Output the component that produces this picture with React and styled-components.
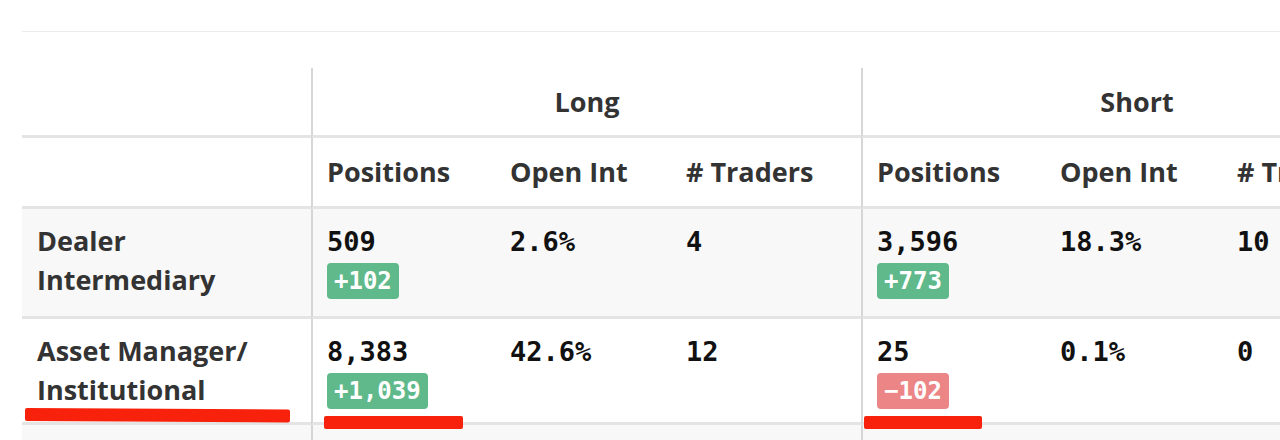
import React from "react";
import styled, { createGlobalStyle } from "styled-components";

const GlobalStyle = createGlobalStyle`
  html, body {
    margin: 0;
    padding: 0;
    background: #fff;
    overflow: hidden;
  }
  body {
    font-family: "Open Sans", "Noto Sans", sans-serif;
  }
`;

const Page = styled.div`
  position: relative;
  width: 1280px;
  height: 440px;
  padding: 31px 0 0 22px;
  box-sizing: border-box;
  overflow: hidden;
`;

const Rule = styled.div`
  height: 1px;
  background: #ececec;
  margin-bottom: 36px;
`;

const Table = styled.table`
  border-collapse: separate;
  border-spacing: 0;
  table-layout: fixed;
  width: 1389px;
`;

const divider = (p) => (p.divider ? "2px solid #d6d6d6" : "none");

const GroupHead = styled.th`
  height: 67px;
  padding: 0;
  text-align: center;
  vertical-align: middle;
  font-size: 27px;
  font-weight: 700;
  color: #333;
  border-bottom: 3px solid #e3e4e3;
  border-left: ${divider};
`;

const ColHead = styled.th`
  height: 66px;
  padding: 0 0 2px ${(p) => (p.divider ? 14 : 16)}px;
  text-align: left;
  vertical-align: middle;
  font-size: 27px;
  font-weight: 700;
  color: #333;
  white-space: nowrap;
  border-bottom: 3px solid #e3e4e3;
  border-left: ${divider};
`;

const Row = styled.tr`
  background: ${(p) => (p.shaded ? "#f7f8f7" : "#fff")};
`;

const Label = styled.td`
  height: ${(p) => p.h}px;
  padding: 12px 0 0 15px;
  box-sizing: border-box;
  vertical-align: top;
  font-size: 27px;
  line-height: 39px;
  font-weight: 700;
  color: #333;
  border-bottom: 3px solid #e3e4e3;
`;

const Cell = styled.td`
  padding: 16px 0 0 ${(p) => (p.divider ? 14 : 16)}px;
  vertical-align: top;
  font-family: "DejaVu Sans Mono", "Liberation Mono", monospace;
  font-size: 27px;
  line-height: 33px;
  font-weight: 700;
  color: #111;
  white-space: nowrap;
  border-bottom: 3px solid #e3e4e3;
  border-left: ${divider};
`;

const Badge = styled.span`
  display: inline-block;
  margin-top: 5px;
  padding: 0 7px;
  height: 36px;
  line-height: 36px;
  border-radius: 4px;
  font-size: 24px;
  color: #fff;
  background: ${(p) => (p.down ? "#ec8585" : "#5fb98a")};
`;

/* hand-drawn red underlines over the table */
const Mark = styled.div`
  position: absolute;
  height: 13px;
  background: #f8220c;
  border-radius: 2px;
  transform-origin: left center;
`;

const rows = [
  {
    name: ["Dealer", "Intermediary"],
    shaded: true,
    h: 110,
    long: ["509", "+102", "2.6%", "4"],
    short: ["3,596", "+773", "18.3%", "10"],
  },
  {
    name: ["Asset Manager/", "Institutional"],
    shaded: false,
    h: 106,
    long: ["8,383", "+1,039", "42.6%", "12"],
    short: ["25", "\u2212102", "0.1%", "0"],
  },
];

const Side = ({ data }) => (
  <>
    <Cell divider>
      <div>{data[0]}</div>
      <Badge down={data[1].startsWith("\u2212")}>{data[1]}</Badge>
    </Cell>
    <Cell>{data[2]}</Cell>
    <Cell>{data[3]}</Cell>
  </>
);

export default function App() {
  return (
    <>
      <GlobalStyle />
      <Page>
        <Rule />
        <Table>
          <colgroup>
            <col style={{ width: 289 }} />
            <col style={{ width: 183 }} />
            <col style={{ width: 176 }} />
            <col style={{ width: 191 }} />
            <col style={{ width: 183 }} />
            <col style={{ width: 177 }} />
            <col style={{ width: 190 }} />
          </colgroup>
          <thead>
            <tr>
              <GroupHead />
              <GroupHead divider colSpan={3}>
                Long
              </GroupHead>
              <GroupHead divider colSpan={3}>
                Short
              </GroupHead>
            </tr>
            <tr>
              <ColHead />
              <ColHead divider>Positions</ColHead>
              <ColHead>Open Int</ColHead>
              <ColHead># Traders</ColHead>
              <ColHead divider>Positions</ColHead>
              <ColHead>Open Int</ColHead>
              <ColHead># Traders</ColHead>
            </tr>
          </thead>
          <tbody>
            {rows.map((r) => (
              <Row key={r.name[0]} shaded={r.shaded}>
                <Label h={r.h}>
                  {r.name[0]}
                  <br />
                  {r.name[1]}
                </Label>
                <Side data={r.long} />
                <Side data={r.short} />
              </Row>
            ))}
            <Row shaded>
              <Label h={40} />
              <Cell divider />
              <Cell />
              <Cell />
              <Cell divider />
              <Cell />
              <Cell />
            </Row>
          </tbody>
        </Table>
        <Mark style={{ left: 25, top: 408, width: 265, transform: "rotate(0.3deg)" }} />
        <Mark style={{ left: 324, top: 416, width: 139 }} />
        <Mark style={{ left: 864, top: 416, width: 118 }} />
      </Page>
    </>
  );
}
